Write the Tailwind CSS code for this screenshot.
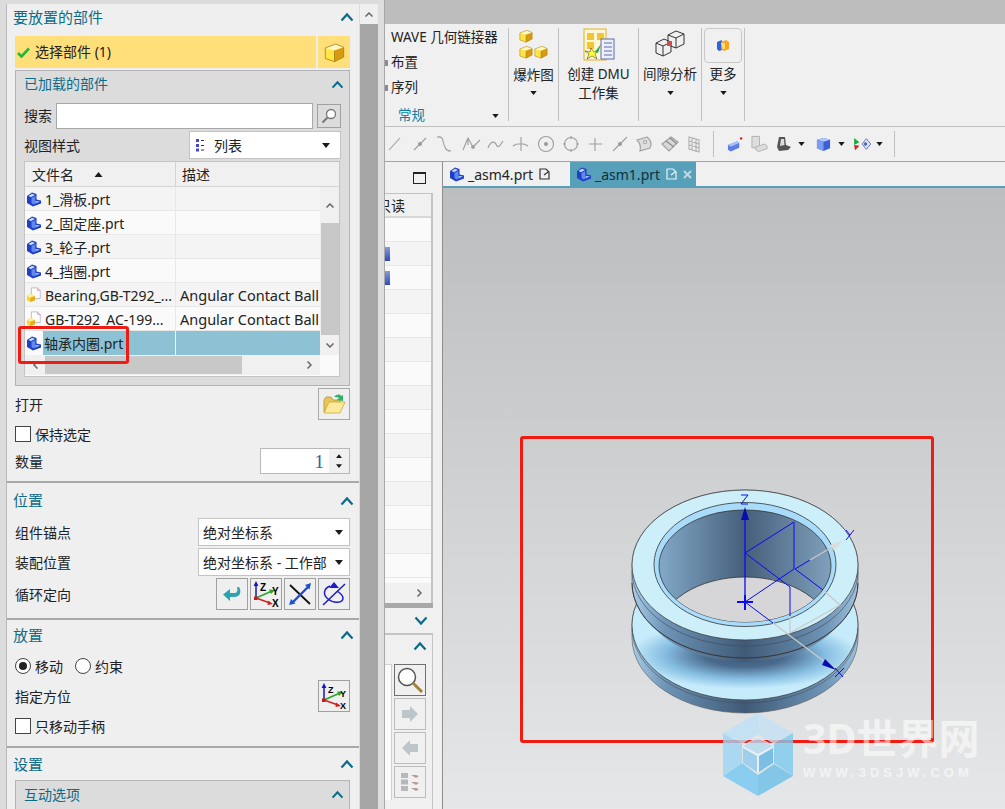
<!DOCTYPE html>
<html lang="zh">
<head>
<meta charset="utf-8">
<script src="https://cdn.jsdelivr.net/npm/@tailwindcss/browser@4"></script>
<title>UG</title>
</head>
<body class="m-0 overflow-hidden">
<svg width="0" height="0" class="absolute">
  <defs>
    <symbol id="part" viewBox="0 0 16 16">
      <path d="M1 5 L6 1.500 L10.500 3 L10.500 8.500 L15 9.500 L15 12.500 L7 15.500 L1 12Z" fill="#1f3fc4"/>
      <path d="M2.500 5 L6 2.800 L9 4 L5 6.200Z" fill="#c9d8fb"/>
      <path d="M5.500 7 L9.300 4.900 L9.300 9.800 L13.800 10.600 L7.500 13.600 L5.500 12Z" fill="#5f88f0"/>
      <path d="M10 10 L14 10.500 L10 12Z" fill="#a9c0f7"/>
    </symbol>
    <symbol id="asmdoc" viewBox="0 0 18 18">
      <path d="M6 1 H13 L16 4 V13 H6Z" fill="#fff" stroke="#b9b4c8"/>
      <path d="M13 1 V4 H16" fill="#e9c9c9" stroke="#c09aa0" stroke-width=".7"/>
      <path d="M1 10 L6 8 L10 10 V15 L5 17 L1 15Z" fill="#f6d33a"/>
      <path d="M1 10 L6 8 L10 10 L5 12Z" fill="#ffed9a"/>
      <path d="M5 12 L10 10 V15 L5 17Z" fill="#e4ae17"/>
    </symbol>
    <symbol id="chev" viewBox="0 0 14 10">
      <path d="M1.500 8.500 L7 2.500 L12.500 8.500" fill="none" stroke="#0b6b89" stroke-width="2.200"/>
    </symbol>
    <symbol id="tri" viewBox="0 0 8 5"><path d="M0 0 H8 L4 5Z" fill="#1a1a1a"/></symbol>
    <symbol id="gold" viewBox="0 0 16 16">
      <path d="M1 4.500 L9 1.500 L15 4 L15 11.500 L8 15 L1 12.500Z" fill="#ffe545"/>
      <path d="M1 4.500 L9 1.500 L15 4 L8 6.500Z" fill="#fff8c4"/>
      <path d="M8 6.500 L15 4 V11.500 L8 15Z" fill="#d69a14"/>
      <path d="M1 4.500 L9 1.500 L15 4 V11.500 L8 15 L1 12.500Z M8 6.500 V15" fill="none" stroke="#a87c12" stroke-width=".6"/>
    </symbol>
    <symbol id="csys" viewBox="0 0 30 30">
      <path d="M5 19 V5" stroke="#1414c8" stroke-width="1.500"/><path d="M5 2 L2.600 7 H7.400Z" fill="#1414c8"/>
      <path d="M5 19 L21 12" stroke="#28a828" stroke-width="1.500"/><path d="M24 11 L18 10.500 L20 15Z" fill="#28a828"/>
      <path d="M5 19 L19 24" stroke="#d02020" stroke-width="1.500"/><path d="M22 25 L17 21.500 L16.500 26Z" fill="#d02020"/>
      <rect x="3" y="17.500" width="3.500" height="3.500" fill="#c81818"/>
    </symbol>
  </defs>
</svg>

<div class="relative flex w-[1005px] h-[809px] overflow-hidden bg-[#bdbdbd] text-[14px] leading-none text-[#222]" style="font-family:'Noto Sans','Noto Sans CJK SC',sans-serif">

  <!-- Left docked panel -->
  <div class="w-[360px] h-full shrink-0 pl-[6px] pt-[4px] bg-[#dcdcdc]">
    <div class="w-[353px] bg-[#efefef] h-full flex flex-col border-l border-[#b8b8b8]">

      <section class="h-[479px] pl-[8px] pr-[9px] border-b-2 border-[#a8a8a8] shrink-0">
        <div class="h-[26px] mb-[6px] -ml-[2px] -mr-[4px] flex items-center justify-between">
          <span class="text-[15px] text-[#0b6b89]">要放置的部件</span>
          <svg class="w-[14px] h-[10px]"><use href="#chev"/></svg>
        </div>
        <div class="flex gap-[2px] h-[32px]">
          <div class="w-[301px] bg-[#ffdf7a] flex items-center pl-[2px] gap-[5px]">
            <svg width="13" height="11" viewBox="0 0 13 11"><path d="M1 6 L4.500 9.500 L12 1.500" fill="none" stroke="#25b53a" stroke-width="2.600"/></svg>
            <span>选择部件 (1)</span>
          </div>
          <div class="w-[32px] bg-[#ffdf7a] flex items-center justify-center">
            <svg width="21" height="21"><use href="#gold"/></svg>
          </div>
        </div>
        <div class="mt-[2px] h-[316px] border border-[#b4b4b4] bg-[#dcdcdc] px-[8px]">
          <div class="h-[26px] -mr-[3px] flex items-center justify-between">
            <span class="text-[#0b6b89]">已加载的部件</span>
            <svg class="w-[13px] h-[9px]"><use href="#chev"/></svg>
          </div>
          <div class="flex items-center h-[26px] mt-[6px]">
            <span class="w-[32px]">搜索</span>
            <div class="w-[257px] h-[26px] bg-white border border-[#a8a8a8]"></div>
            <div class="ml-[4px] w-[24px] h-[24px] border border-[#a0a0a0] flex items-center justify-center">
              <svg width="16" height="16" viewBox="0 0 16 16"><circle cx="10" cy="6" r="4.500" fill="#fff" stroke="#777" stroke-width="1.300"/><path d="M6.500 9.500 L1.500 14.500" stroke="#777" stroke-width="2"/></svg>
            </div>
          </div>
          <div class="flex items-center h-[28px] mt-[2px]">
            <span class="w-[165px] pt-[2px]">视图样式</span>
            <div class="w-[152px] h-[28px] bg-white border border-[#c4c4c4] flex items-center pl-[5px] pr-[10px]">
              <svg width="10" height="14" viewBox="0 0 10 14"><g fill="#4646c8"><rect x="1" y="1" width="3" height="3"/><rect x="1" y="6" width="3" height="3"/><rect x="1" y="10.500" width="3" height="3"/></g><g fill="#333"><rect x="6" y="2" width="3" height="1"/><rect x="6" y="7" width="3" height="1"/><rect x="6" y="11.500" width="3" height="1"/></g></svg>
              <span class="ml-[9px] flex-1 pt-[2px]">列表</span>
              <svg width="8" height="5"><use href="#tri"/></svg>
            </div>
          </div>
          <!-- file table -->
          <div class="mt-[2px] w-[316px] h-[216px] border border-[#c4c4c4] bg-[#fafafa] relative overflow-hidden">
            <div class="flex h-[25px] bg-[#f0f0f0] border-b border-[#d4d4d4] items-center">
              <div class="w-[151px] h-full border-r border-[#d4d4d4] flex items-center pl-[7px]"><span class="pt-[2px]">文件名</span><svg class="ml-[20px]" width="9" height="5" viewBox="0 0 8 5"><path d="M0 5 H8 L4 0Z" fill="#1a1a1a"/></svg></div>
              <div class="pl-[6px] pt-[2px]">描述</div>
            </div>
            <div class="flex">
              <div class="w-[295px]">
                <div class="flex h-[24px] bg-[#f4f4f4] border-b border-[#e8e8e8] items-center"><div class="w-[151px] h-full border-r border-[#e8e8e8] flex items-center pl-[1px] gap-[3px] shrink-0"><svg width="16" height="16"><use href="#part"/></svg><span class="pt-[2px]">1_滑板.prt</span></div></div>
                <div class="flex h-[24px] bg-[#fafafa] border-b border-[#e8e8e8] items-center"><div class="w-[151px] h-full border-r border-[#e8e8e8] flex items-center pl-[1px] gap-[3px] shrink-0"><svg width="16" height="16"><use href="#part"/></svg><span class="pt-[2px]">2_固定座.prt</span></div></div>
                <div class="flex h-[24px] bg-[#f4f4f4] border-b border-[#e8e8e8] items-center"><div class="w-[151px] h-full border-r border-[#e8e8e8] flex items-center pl-[1px] gap-[3px] shrink-0"><svg width="16" height="16"><use href="#part"/></svg><span class="pt-[2px]">3_轮子.prt</span></div></div>
                <div class="flex h-[24px] bg-[#fafafa] border-b border-[#e8e8e8] items-center"><div class="w-[151px] h-full border-r border-[#e8e8e8] flex items-center pl-[1px] gap-[3px] shrink-0"><svg width="16" height="16"><use href="#part"/></svg><span class="pt-[2px]">4_挡圈.prt</span></div></div>
                <div class="flex h-[24px] bg-[#f4f4f4] border-b border-[#e8e8e8] items-center"><div class="w-[151px] h-full border-r border-[#e8e8e8] flex items-center pl-[1px] gap-[3px] shrink-0"><svg width="16" height="16"><use href="#asmdoc"/></svg><span class="whitespace-nowrap pt-[2px]">Bearing,GB-T292_...</span></div><span class="pl-[4px] pt-[2px] whitespace-nowrap text-[14.500px]">Angular Contact Ball</span></div>
                <div class="flex h-[24px] bg-[#fafafa] border-b border-[#e8e8e8] items-center"><div class="w-[151px] h-full border-r border-[#e8e8e8] flex items-center pl-[1px] gap-[3px] shrink-0"><svg width="16" height="16"><use href="#asmdoc"/></svg><span class="whitespace-nowrap pt-[2px]">GB-T292_AC-199...</span></div><span class="pl-[4px] pt-[2px] whitespace-nowrap text-[14.500px]">Angular Contact Ball</span></div>
                <div class="flex h-[24px] bg-[#fafafa] items-center"><div class="w-[151px] h-full flex items-center pl-[1px] shrink-0"><svg width="16" height="16" class="shrink-0"><use href="#part"/></svg><span class="ml-[1px] pl-[1px] pt-[2px] bg-[#8cc2d3] h-full flex-1 flex items-center border-r border-[#f4f4f4]">轴承内圈.prt</span></div><div class="flex-1 h-full bg-[#8cc2d3]"></div></div>
              </div>
              <!-- vertical scrollbar -->
              <div class="w-[19px] h-[168px] bg-[#f0f0f0] flex flex-col items-center">
                <div class="h-[36px] w-full flex items-center justify-center"><svg width="8" height="5" viewBox="0 0 8 5"><path d="M.5 4.500 L4 1 L7.500 4.500" fill="none" stroke="#666" stroke-width="1.500"/></svg></div>
                <div class="w-[18px] h-[112px] bg-[#c8c8c8]"></div>
                <div class="flex-1 w-full flex items-center justify-center"><svg width="8" height="5" viewBox="0 0 8 5"><path d="M.5.5 L4 4 L7.500 .5" fill="none" stroke="#666" stroke-width="1.500"/></svg></div>
              </div>
            </div>
            <!-- horizontal scrollbar -->
            <div class="h-[20px] flex items-center bg-[#f0f0f0] w-[295px]">
              <div class="w-[20px] flex justify-center"><svg width="5" height="8" viewBox="0 0 5 8"><path d="M4.500 .5 L1 4 L4.500 7.500" fill="none" stroke="#666" stroke-width="1.500"/></svg></div>
              <div class="w-[197px] h-[18px] bg-[#c8c8c8]"></div>
              <div class="ml-[57px] w-[20px] flex justify-center"><svg width="5" height="8" viewBox="0 0 5 8"><path d="M.5.5 L4 4 L.5 7.500" fill="none" stroke="#666" stroke-width="1.500"/></svg></div>
            </div>
          </div>
        </div>

        <div class="flex items-center justify-between h-[32px] mt-[2px]">
          <span class="pt-[2px]">打开</span>
          <div class="w-[32px] h-[32px] border border-[#a8a8a8] flex items-center justify-center">
            <svg width="24" height="22" viewBox="0 0 24 22"><path d="M2 7 L2 19 L18 19 L18 7 L11 7 L9 4 L4 4Z" fill="#e8c658" stroke="#a88b2a" stroke-width=".7"/><path d="M2 20 L7 9 H23 L18 20Z" fill="#fdeb9b" stroke="#c4a030" stroke-width=".7"/><path d="M12 4 C15 1 18 1 19 3 L21 2 L21 8 L15 7 L17 5 C16 4 14 4 12 4Z" fill="#2db36a"/></svg>
          </div>
        </div>
        <div class="flex items-center h-[16px] mt-[6px] gap-[4px]">
          <div class="w-[16px] h-[16px] bg-white border border-[#444]"></div><span class="pt-[2px]">保持选定</span>
        </div>
        <div class="flex items-center justify-between h-[26px] mt-[6px]">
          <span class="pt-[2px]">数量</span>
          <div class="w-[90px] h-[26px] border border-[#b8b8b8] bg-white flex items-center">
            <span class="flex-1 text-right pr-[5px] text-[#2f5f9a] text-[19px]" style="font-family:'Liberation Serif',serif">1</span>
            <div class="w-[20px] h-full bg-[#f0f0f0] flex flex-col items-center justify-center gap-[6px]">
              <svg width="6" height="4" viewBox="0 0 8 5"><path d="M0 5 H8 L4 0Z" fill="#1a1a1a"/></svg>
              <svg width="6" height="4" viewBox="0 0 8 5"><path d="M0 0 H8 L4 5Z" fill="#1a1a1a"/></svg>
            </div>
          </div>
        </div>
      </section>

      <section class="h-[137px] pl-[8px] pr-[9px] border-b-2 border-[#a8a8a8] shrink-0">
        <div class="h-[35px] -ml-[2px] -mr-[4px] flex items-center justify-between">
          <span class="text-[15px] text-[#0b6b89]">位置</span>
          <svg class="w-[14px] h-[10px]"><use href="#chev"/></svg>
        </div>
        <div class="flex items-center justify-between h-[28px]">
          <span class="pt-[2px]">组件锚点</span>
          <div class="w-[152px] h-[28px] bg-white border border-[#c4c4c4] flex items-center pl-[4px] pr-[6px] justify-between"><span class="pt-[2px]">绝对坐标系</span><svg width="8" height="5"><use href="#tri"/></svg></div>
        </div>
        <div class="flex items-center justify-between h-[28px] mt-[2px]">
          <span class="pt-[2px]">装配位置</span>
          <div class="w-[152px] h-[28px] bg-white border border-[#c4c4c4] flex items-center pl-[4px] pr-[6px] justify-between"><span class="pt-[2px] whitespace-nowrap">绝对坐标系 - 工作部</span><svg width="8" height="5"><use href="#tri"/></svg></div>
        </div>
        <div class="flex items-center justify-between h-[32px] mt-[2px]">
          <span class="pt-[2px]">循环定向</span>
          <div class="flex gap-[2px]">
            <div class="w-[32px] h-[32px] border border-[#a0a0a0] flex items-center justify-center">
              <svg width="20" height="16" viewBox="0 0 20 16"><path d="M17 1 C20 6 18 11 12 11 H8 V15 L1 8.500 L8 3 V7 H12 C15 7 16 5 15 1Z" fill="#2da3ad"/></svg>
            </div>
            <div class="w-[32px] h-[32px] border border-[#a0a0a0] relative">
              <svg class="absolute left-0 top-0" width="30" height="30"><use href="#csys"/></svg>
              <span class="absolute left-[9px] top-[4px] text-[10px] font-bold text-black" style="font-family:'Liberation Sans',sans-serif">Z</span>
              <span class="absolute left-[21px] top-[8px] text-[10px] font-bold text-black" style="font-family:'Liberation Sans',sans-serif">Y</span>
              <span class="absolute left-[21px] top-[20px] text-[10px] font-bold text-black" style="font-family:'Liberation Sans',sans-serif">X</span>
            </div>
            <div class="w-[32px] h-[32px] border border-[#a0a0a0] flex items-center justify-center">
              <svg width="28" height="28" viewBox="0 0 28 28"><path d="M4 5 L24 24" stroke="#111" stroke-width="1.800"/><path d="M7 22 L22 7" stroke="#1a4fd0" stroke-width="2.400"/><path d="M25 3 L19 5 L23.500 9.500Z M3 25 L5 19 L9.500 23.500Z" fill="#1a4fd0"/></svg>
            </div>
            <div class="w-[32px] h-[32px] border border-[#a0a0a0] flex items-center justify-center">
              <svg width="28" height="28" viewBox="0 0 28 28" fill="none" stroke="#1c1cc8" stroke-width="1.500"><path d="M3 25 L25 4"/><path d="M10 6 C3 9 3 15 8 19 C14 24 23 23 23 18 C23 15 20 13 17 11"/><path d="M14 2 L19 8 H9Z" fill="#1c1cc8" stroke="none"/></svg>
            </div>
          </div>
        </div>
      </section>

      <section class="h-[128px] pl-[8px] pr-[9px] border-b-2 border-[#a8a8a8] shrink-0">
        <div class="h-[30px] -ml-[2px] -mr-[4px] flex items-center justify-between">
          <span class="text-[15px] text-[#0b6b89]">放置</span>
          <svg class="w-[14px] h-[10px]"><use href="#chev"/></svg>
        </div>
        <div class="flex items-center h-[16px] mt-[8px]">
          <div class="w-[16px] h-[16px] rounded-full bg-white border border-[#444] flex items-center justify-center"><div class="w-[8px] h-[8px] rounded-full bg-[#222]"></div></div>
          <span class="ml-[4px] pt-[2px]">移动</span>
          <div class="ml-[12px] w-[16px] h-[16px] rounded-full bg-white border border-[#444]"></div>
          <span class="ml-[4px] pt-[2px]">约束</span>
        </div>
        <div class="flex items-center justify-between h-[32px] mt-[6px]">
          <span class="pt-[2px]">指定方位</span>
          <div class="w-[32px] h-[32px] border border-[#a0a0a0] relative">
            <svg class="absolute left-0 top-0" width="30" height="30"><use href="#csys"/></svg>
            <span class="absolute left-[9px] top-[5px] text-[9px] font-bold text-black" style="font-family:'Liberation Sans',sans-serif">Z</span>
            <span class="absolute left-[21px] top-[9px] text-[9px] font-bold text-black" style="font-family:'Liberation Sans',sans-serif">Y</span>
            <span class="absolute left-[21px] top-[21px] text-[9px] font-bold text-black" style="font-family:'Liberation Sans',sans-serif">X</span>
          </div>
        </div>
        <div class="flex items-center h-[16px] mt-[6px] gap-[4px]">
          <div class="w-[16px] h-[16px] bg-white border border-[#444]"></div><span class="pt-[2px]">只移动手柄</span>
        </div>
      </section>

      <section class="pl-[8px] pr-[9px] flex-1 min-h-0 overflow-hidden">
        <div class="h-[32px] -ml-[2px] -mr-[4px] flex items-center justify-between">
          <span class="text-[15px] text-[#0b6b89]">设置</span>
          <svg class="w-[14px] h-[10px]"><use href="#chev"/></svg>
        </div>
        <div class="h-[60px] border border-[#b4b4b4] bg-[#dcdcdc] px-[8px]">
          <div class="h-[27px] -mr-[3px] flex items-center justify-between">
            <span class="text-[#0b6b89]">互动选项</span>
            <svg class="w-[13px] h-[9px]"><use href="#chev"/></svg>
          </div>
        </div>
      </section>
    </div>
  </div>

  <!-- Panel scrollbar -->
  <div class="w-[18px] h-full shrink-0 bg-[#efefef]">
    <div class="h-[4px] bg-[#dcdcdc]"></div>
    <div class="h-[20px] flex items-center justify-center"><svg width="8" height="5" viewBox="0 0 8 5"><path d="M.5 4.500 L4 1 L7.500 4.500" fill="none" stroke="#666" stroke-width="1.500"/></svg></div>
    <div class="h-full bg-[#a6a6a6]"></div>
  </div>
  <div class="w-[6px] h-full shrink-0 bg-[#dedede]"></div>

  <!-- Main area -->
  <div class="flex-1 min-w-0 flex flex-col border-l border-[#a8a8a8]">
    <div class="h-[24px] bg-[#bdbdbd] shrink-0"></div>

    <!-- ribbon -->
    <div class="h-[103px] bg-[#f0f0f0] border-b border-[#c0c0c0] flex shrink-0 pt-[4px] text-[13.500px]">
      <div class="w-[124px] border-r border-[#c0c0c0] h-[93px] pl-[6px]">
        <div class="-mt-[3px] h-[25px] flex items-center whitespace-nowrap">WAVE 几何链接器</div>
        <div class="h-[25px] flex items-center"><span class="-ml-[6px] mr-[3px] w-[3px] h-[6px] bg-[#8a8a9a]"></span><span>布置</span></div>
        <div class="h-[25px] flex items-center"><span class="-ml-[6px] mr-[3px] w-[3px] h-[6px] bg-[#8a8a9a]"></span><span>序列</span></div>
        <div class="mt-[7px] h-[18px] flex items-center justify-between pl-[7px] pr-[9px] text-[#0b7ea3]"><span>常规</span><svg width="7" height="4"><use href="#tri"/></svg></div>
      </div>
      <div class="w-[50px] border-r border-[#c0c0c0] h-[93px] flex flex-col items-center">
        <svg width="30" height="30" viewBox="0 0 30 30" class="mt-[1px]"><use href="#gold" x="0" y="0" width="14" height="14"/><use href="#gold" x="0" y="16" width="14" height="14"/><use href="#gold" x="15" y="16" width="14" height="14"/></svg>
        <span class="mt-[9px] pt-[1px]">爆炸图</span>
        <svg class="mt-[8px]" width="7" height="4"><use href="#tri"/></svg>
      </div>
      <div class="w-[80px] border-r border-[#c0c0c0] h-[93px] flex flex-col items-center">
        <svg width="32" height="33" viewBox="0 0 32 33">
          <rect x="1" y="1" width="22" height="31" fill="#fff8d6" stroke="#e0b020"/>
          <rect x="4" y="5" width="7" height="7" fill="#f2c633"/><rect x="14" y="5" width="7" height="7" fill="#f2c633"/><rect x="4" y="14" width="7" height="7" fill="#f2c633"/>
          <rect x="18" y="11" width="13" height="20" fill="#eef" stroke="#5a6ea8"/><path d="M21 15 H29 M21 19 H29 M21 23 H29 M21 27 H29" stroke="#5a6ea8"/>
          <path d="M8 20 L11 24 L15 22 L12 26 L14 31 L9 28 L4 31 L6 26 L2 23 L7 24Z" fill="#ffff30" stroke="#202060" stroke-width=".5"/>
          <path d="M12 24 L18 16 L15 25Z" fill="#2aa838"/>
        </svg>
        <span class="mt-[4px] leading-[19px] text-center whitespace-nowrap">创建 DMU<br>工作集</span>
      </div>
      <div class="w-[63px] border-r border-[#c0c0c0] h-[93px] flex flex-col items-center">
        <svg width="32" height="30" viewBox="0 0 32 30" fill="none" stroke="#333" class="mt-[1px]"><path d="M2 14 L10 10 L17 13 L17 23 L9 27 L2 24Z M2 14 L9 17 L17 13 M9 17 V27"/><path d="M14 6 L22 2 L30 5 L30 15 L22 19 L14 16Z M14 6 L22 9 L30 5 M22 9 V19"/><rect x="13" y="12" width="5" height="5" fill="#d84a4a" stroke="none"/></svg>
        <span class="mt-[9px]">间隙分析</span>
        <svg class="mt-[9px]" width="7" height="4"><use href="#tri"/></svg>
      </div>
      <div class="w-[43px] border-r border-[#c0c0c0] h-[93px] flex flex-col items-center">
        <div class="w-[38px] h-[35px] border border-[#c8c8c8] rounded-[4px] flex items-center justify-center">
          <svg width="14" height="13" viewBox="0 0 14 13"><path d="M1 3 L6 1 L6 11 L3 12 L1 10Z" fill="#2a62e0"/><path d="M5 3 L10 1 L13 3 L13 10 L8 12 L5 10Z" fill="#f2a72a"/><path d="M5 4 L9 4 L9 10 L7 10Z" fill="#ffdd66"/></svg>
        </div>
        <span class="mt-[5px]">更多</span>
        <svg class="mt-[9px]" width="7" height="4"><use href="#tri"/></svg>
      </div>
    </div>

    <!-- toolbar -->
    <div class="h-[35px] bg-[#f0f0f0] border-b border-[#a4a4a4] shrink-0 flex items-center pl-[1px]">
      <svg width="320" height="22" viewBox="386 133 320 22" fill="none" stroke="#9e9e9e" stroke-width="1.100">
        <path d="M389 150 L400 138"/>
        <path d="M414 150 L426 138"/><circle cx="420" cy="144" r="1.500" fill="#9e9e9e"/>
        <path d="M437 137 C445 136 442 143 445 147 C446 151 449 151 451 151"/>
        <path d="M463 150 L468 138 L473 147 L480 140 M468 138 V145"/><circle cx="473" cy="147" r="1.300" fill="#9e9e9e"/>
        <path d="M488 148 C491 140 495 141 497 146 C499 148 501 144 503 141"/>
        <path d="M513 146 C517 143 524 143 528 146 M521 137 V151"/>
        <circle cx="546" cy="144" r="7.500"/><circle cx="546" cy="144" r="1.500" fill="#9e9e9e"/>
        <circle cx="571" cy="144" r="6.500"/><path d="M571 136 V139 M571 149 V152 M563 144 H566 M576 144 H579"/>
        <path d="M595 138 V151 M589 144 H602"/>
        <path d="M613 151 L627 137"/><circle cx="620" cy="144" r="1.500" fill="#9e9e9e"/>
        <path d="M637 140 L647 137 C651 140 652 144 650 148 L640 151 C641 147 640 143 637 140Z" fill="#dedede"/><circle cx="645" cy="142" r="1.500" fill="#fff"/>
        <path d="M662 144 L671 137 L678 142 L669 151Z" fill="#d8d8d8"/><path d="M666 141 L674 147 M670 138 L677 144" stroke="#8a8a8a"/>
        <path d="M689 137 L699 140 V152 L689 149Z M689 141 L699 144 M689 145 L699 148 M692 138 V150 M696 139 V151" stroke="#b0b0b0"/>
      </svg>
      <div class="ml-[7px] w-px h-[26px] bg-[#c0c0c0]"></div>
      <svg class="ml-[13px]" width="16" height="17" viewBox="0 0 17 17"><path d="M1 9 L11 5 L13 7 L13 12 L4 16 L1 14Z" fill="#5a7be8"/><path d="M1 9 L11 5 L13 7 L4 11Z" fill="#a8c0f5"/><circle cx="15" cy="2" r="1.300" fill="#d81818"/></svg>
      <svg class="ml-[8px]" width="17" height="18" viewBox="0 0 18 18" fill="#ddd" stroke="#b0b0b0"><path d="M1 1 H9 V13 H1Z"/><path d="M5 12 L15 9 L17 11 V14 L8 17 L5 15Z"/></svg>
      <svg class="ml-[8px]" width="16" height="16" viewBox="0 0 16 16"><path d="M3 1 L9 1 L10 9 L15 11 L12 14 L3 15 L1 11Z" fill="#555"/><path d="M5 3 L8 3 L8.500 9 L4 10Z" fill="#ddd"/></svg>
      <svg class="ml-[6px]" width="7" height="4"><use href="#tri"/></svg>
      <svg class="ml-[11px]" width="15" height="15" viewBox="0 0 16 16"><path d="M1 3 L8 1 L15 3 L15 12 L8 15 L1 12Z" fill="#3b5fd8"/><path d="M1 3 L8 1 L15 3 L8 5Z" fill="#b4c8f8"/><path d="M1 3 L8 5 V15 L1 12Z" fill="#7c9cf0"/></svg>
      <svg class="ml-[7px]" width="7" height="4"><use href="#tri"/></svg>
      <svg class="ml-[8px]" width="18" height="14" viewBox="0 0 20 16"><path d="M1 1 L7 6 L1 9Z" fill="#20a840"/><path d="M1 9 L7 10 L2 15Z" fill="#d02020"/><path d="M10 8 L15 2 L20 8 L15 14Z" fill="#dfe6f8" stroke="#5068b0"/><circle cx="14" cy="8" r="2" fill="#5068b0"/></svg>
      <svg class="ml-[5px]" width="7" height="4"><use href="#tri"/></svg>
      <div class="ml-[11px] w-px h-[26px] bg-[#c0c0c0]"></div>
    </div>

    <!-- work area -->
    <div class="flex-1 min-h-0 flex">
      <!-- navigator -->
      <div class="w-[58px] bg-[#f0f0f0] shrink-0 flex flex-col border-r border-[#8e8e8e]">
        <div class="h-[31px] flex justify-end items-center pr-[16px]"><div class="w-[13px] h-[12px] border border-[#222] border-t-2"></div></div>
        <div class="w-[48px] h-[410px] border-r-2 border-t border-[#c4c4c4] bg-[#fafafa] overflow-hidden">
          <div class="h-[24px] bg-[#f0f0f0] border-b-2 border-[#d8d8d8] whitespace-nowrap flex items-center justify-end pr-[26px] pt-[2px]"><span class="shrink-0">只读</span></div>
          <div class="h-[24px] border-b border-[#e8e8e8]"></div>
          <div class="h-[24px] bg-[#f4f4f4] border-b border-[#e8e8e8] flex items-center"><div class="w-[5px] h-[14px] bg-gradient-to-b from-[#8a9ad0] to-[#3048c0]"></div></div>
          <div class="h-[24px] border-b border-[#e8e8e8] flex items-center"><div class="w-[5px] h-[14px] bg-gradient-to-b from-[#8a9ad0] to-[#3048c0]"></div></div>
          <div class="h-[24px] bg-[#f4f4f4] border-b border-[#e8e8e8]"></div>
          <div class="h-[24px] border-b border-[#e8e8e8]"></div>
          <div class="h-[24px] bg-[#f4f4f4] border-b border-[#e8e8e8]"></div>
          <div class="h-[24px] border-b border-[#e8e8e8]"></div>
          <div class="h-[24px] bg-[#f4f4f4] border-b border-[#e8e8e8]"></div>
          <div class="h-[24px] border-b border-[#e8e8e8]"></div>
          <div class="h-[24px] bg-[#f4f4f4] border-b border-[#e8e8e8]"></div>
          <div class="h-[24px] border-b border-[#e8e8e8]"></div>
          <div class="h-[24px] bg-[#f4f4f4] border-b border-[#e8e8e8]"></div>
          <div class="h-[24px] border-b border-[#e8e8e8]"></div>
          <div class="h-[24px] bg-[#f4f4f4] border-b border-[#e8e8e8]"></div>
          <div class="h-[24px] border-b border-[#e8e8e8]"></div>
          <div class="h-[5px]"></div>
          <div class="h-[20px] bg-[#f0f0f0] flex justify-end items-center pr-[9px]"><svg width="5" height="8" viewBox="0 0 5 8"><path d="M.5.5 L4 4 L.5 7.500" fill="none" stroke="#666" stroke-width="1.500"/></svg></div>
        </div>
        <div class="w-[48px] h-[5px] bg-[#a8a8a8]"></div>
        <div class="h-[25px] w-[48px] flex justify-end items-center pr-[5px]"><svg class="rotate-180" width="14" height="10"><use href="#chev"/></svg></div>
        <div class="w-[48px] flex-1 border-t-2 border-r border-[#c4c4c4] pt-[6px]">
          <div class="flex justify-end pr-[5px]"><svg width="14" height="10"><use href="#chev"/></svg></div>
          <div class="mt-[13px] flex">
            <div class="w-[7px] h-[136px] bg-[#fafafa] border-t border-r border-[#d0d0d0]"></div>
            <div class="ml-[2px] flex flex-col gap-[2px]">
              <div class="w-[32px] h-[32px] border border-[#707070] flex items-center justify-center"><svg width="28" height="28" viewBox="0 0 28 28"><circle cx="11" cy="11" r="8.500" fill="#fff" stroke="#555" stroke-width="1.500"/><path d="M17 17 L26 26" stroke="#a0823a" stroke-width="3"/></svg></div>
              <div class="w-[32px] h-[32px] border border-[#bbb] flex items-center justify-center"><svg width="18" height="16" viewBox="0 0 18 16"><path d="M1 4 H9 V0 L17 8 L9 16 V12 H1Z" fill="#bcc6ca"/></svg></div>
              <div class="w-[32px] h-[32px] border border-[#bbb] flex items-center justify-center"><svg width="18" height="16" viewBox="0 0 18 16"><path d="M17 4 H9 V0 L1 8 L9 16 V12 H17Z" fill="#bcc6ca"/></svg></div>
              <div class="w-[32px] h-[32px] border border-[#bbb] flex items-center justify-center"><svg width="20" height="20" viewBox="0 0 20 20" fill="#b8b8b8"><rect x="1" y="1" width="7" height="5"/><rect x="1" y="7.500" width="7" height="5"/><rect x="1" y="14" width="7" height="5"/><path d="M11 3 H16 L19 4 L16 6Z M11 10 H16 L19 11 L16 13Z M11 16 H16 L19 17 L16 19Z" fill="#b59c96"/></svg></div>
            </div>
          </div>
        </div>
      </div>

      <!-- graphics -->
      <div class="flex-1 min-w-0 flex flex-col">
        <div class="h-[24px] bg-[#f0f0f0] flex shrink-0">
          <div class="w-[127px] flex items-center pl-[6px]">
            <svg width="16" height="16"><use href="#part"/></svg>
            <span class="ml-[3px] pt-[2px]">_asm4.prt</span>
            <svg class="ml-[6px]" width="11" height="12" viewBox="0 0 11 12" fill="none" stroke="#333" stroke-width="1.200"><path d="M1 1 H7 L10 4 V11 H1Z M5 7 L9 4"/></svg>
          </div>
          <div class="w-[126px] bg-[#56a0ba] flex items-center pl-[6px] text-[#10303c]">
            <svg width="16" height="16"><use href="#part"/></svg>
            <span class="ml-[3px] pt-[2px]">_asm1.prt</span>
            <svg class="ml-[6px]" width="11" height="12" viewBox="0 0 11 12" fill="none" stroke="#e8f4f8" stroke-width="1.200"><path d="M1 1 H7 L10 4 V11 H1Z M5 7 L9 4"/></svg>
            <svg class="ml-[6px]" width="9" height="9" viewBox="0 0 9 9" stroke="#bcd8e2" stroke-width="2"><path d="M1 1 L8 8 M8 1 L1 8"/></svg>
          </div>
        </div>
        <div class="h-[2px] bg-[#56a0ba] shrink-0"></div>
        <div class="flex-1 relative bg-gradient-to-b from-[#bcbdbf] to-[#e6e7e9]">
          <!-- 3D model, page coordinates offset by (443,188) -->
          <svg class="absolute left-0 top-0" width="562" height="621" viewBox="443 188 562 621">
            <defs>
              <linearGradient id="side" x1="0" x2="1" y1="0" y2="0">
                <stop offset="0" stop-color="#a8cde8"/><stop offset=".15" stop-color="#6d93b5"/><stop offset=".5" stop-color="#3f5a77"/><stop offset=".85" stop-color="#6d93b5"/><stop offset="1" stop-color="#9cc0dc"/>
              </linearGradient>
              <linearGradient id="wall" x1="0" x2="1" y1="0" y2="0">
                <stop offset="0" stop-color="#82a9c9"/><stop offset=".5" stop-color="#465f7b"/><stop offset="1" stop-color="#7fa0bc"/>
              </linearGradient>
              <radialGradient id="flange" gradientUnits="userSpaceOnUse" cx="0" cy="0" r="1" gradientTransform="translate(745 655) scale(115 34)">
                <stop offset="0" stop-color="#3b5573"/><stop offset=".35" stop-color="#4a6a8c"/><stop offset=".7" stop-color="#86bde2"/><stop offset="1" stop-color="#c6ecfb"/>
              </radialGradient>
              <clipPath id="hole"><ellipse cx="745" cy="566" rx="86" ry="56"/></clipPath>
            </defs>
            <path d="M632 625 A113 75 0 0 1 858 625 V638 A113 75 0 0 1 632 638Z" fill="url(#side)" stroke="#555" stroke-width=".6"/>
            <ellipse cx="745" cy="625" rx="113" ry="75" fill="url(#flange)" stroke="#444" stroke-width=".8"/>
            <path d="M632 628 A113 75 0 0 0 858 628" fill="none" stroke="#445" stroke-width=".5"/>
            <path d="M638 565 A107 72 0 0 0 852 565 V590 A107 72 0 0 1 638 590Z" fill="url(#side)"/>
            <path d="M632 565 A113 75 0 0 1 858 565 V583 A113 75 0 0 1 632 583Z" fill="url(#side)" stroke="#555" stroke-width=".6"/>
            <path d="M632 583 A113 75 0 0 0 858 583" fill="none" stroke="#333" stroke-width=".9"/>
            <path d="M632 571 A113 75 0 0 0 858 571" fill="none" stroke="#445" stroke-width=".6"/>
            <ellipse cx="745" cy="565" rx="113" ry="75" fill="#cdeffa" stroke="#444" stroke-width=".8"/>
            <ellipse cx="745" cy="564.500" rx="91" ry="62" fill="#a9dcfb" stroke="#333" stroke-width=".8"/>
            <ellipse cx="745" cy="566" rx="86" ry="56" fill="url(#wall)" stroke="#333" stroke-width=".8"/>
            <g clip-path="url(#hole)"><ellipse cx="745" cy="633" rx="86" ry="56" fill="#d6d6d8" stroke="#333" stroke-width=".8"/></g>
            <g fill="none" stroke="#0a0af0" stroke-width="1">
              <path d="M745 520 V602" stroke-width="1.300"/>
              <path d="M745 553 L794 522 V569 L745 602"/>
              <path d="M745 553 L790 587"/>
              <path d="M795 569 L823 590"/>
              <path d="M795 569 L810 560"/>
              <path d="M790 587 V616"/>
              <path d="M745 602 L773 623"/>
              <path d="M737 602 H753 M745 595 V610" stroke-width="2"/>
              <path d="M741 495 H748 L741 504 H748"/>
              <path d="M846 530 L850 535 M854 530 L846 540"/>
              <path d="M835 668 L843 677 M844 668 L835 677"/>
            </g>
            <g fill="none" stroke="#c9c9c9" stroke-width="1.300">
              <path d="M810 560 L834 546"/>
              <path d="M823 590 L840 605 L790 633 V616"/>
              <path d="M773 623 L825 662"/>
            </g>
            <path d="M745 507 L741 520 H749Z" fill="#0a0ab0"/>
            <path d="M843 540 L830 545 L834 551Z" fill="#dcdcdc"/>
            <path d="M836 670 L825 659 L822 665Z" fill="#0a0ab0"/>
          </svg>
          <!-- red rectangle -->
          <div class="absolute left-[77px] top-[248px] w-[414px] h-[307px] border-[3px] border-[#f01c14] rounded-[3px]"></div>
          <!-- watermark -->
          <div class="absolute left-[280px] top-[525px] flex items-start">
            <svg width="71" height="84" viewBox="0 0 71 84" class="opacity-80">
              <path d="M35 0 L70 20 L51 31 L35 21Z" fill="#c4e2f4"/>
              <path d="M70 20 V63 L51 50 V31Z" fill="#7fcbef"/>
              <path d="M70 63 L35 83 L35 62 L51 51Z" fill="#6cbfe9"/>
              <path d="M35 83 L0 63 L19 50 L35 62Z" fill="#74c8f2"/>
              <path d="M0 63 V20 L19 31 V50Z" fill="#9ed6f4"/>
              <path d="M0 20 L35 0 L35 21 L19 31Z" fill="#bde2f6"/>
              <path d="M35 24 L50 32 V50 L35 59 L20 50 V32Z" fill="#eef4f8"/>
              <path d="M35 25 L50 33 L35 41 L20 33Z" fill="#b6dcf2"/>
              <path d="M20 35 L34 43 V59 L20 50Z" fill="#8fcbef"/>
              <path d="M36 43 L50 35 V50 L36 59Z" fill="#62b6e4"/>
            </svg>
            <div class="ml-[9px] text-white/55">
              <div class="mt-[2px] text-[41px] font-bold leading-[46px] whitespace-nowrap" style="font-family:'Noto Sans','Noto Sans CJK SC',sans-serif">3D世界网</div>
              <div class="mt-[5px] text-[13px] font-bold tracking-[4px] whitespace-nowrap" style="font-family:'Liberation Sans',sans-serif">WWW.3DSJW.COM</div>
            </div>
          </div>
        </div>
      </div>
    </div>
  </div>

  <!-- red highlight on the list row -->
  <div class="absolute left-[18px] top-[326px] w-[111px] h-[38px] border-[3px] border-[#f01c14] rounded-[3px]"></div>
</div>
</body>
</html>
